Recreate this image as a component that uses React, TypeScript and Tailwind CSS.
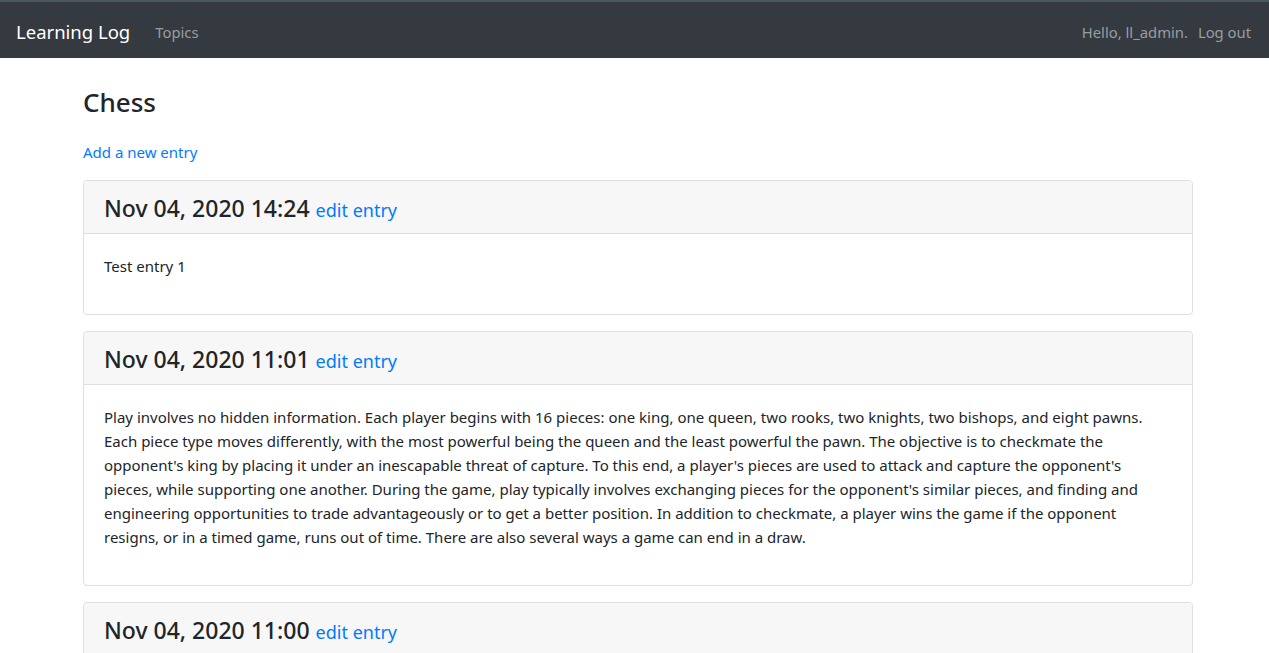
const entries = [
  {
    date: 'Nov 04, 2020 14:24',
    text: 'Test entry 1',
  },
  {
    date: 'Nov 04, 2020 11:01',
    text: "Play involves no hidden information. Each player begins with 16 pieces: one king, one queen, two rooks, two knights, two bishops, and eight pawns. Each piece type moves differently, with the most powerful being the queen and the least powerful the pawn. The objective is to checkmate the opponent's king by placing it under an inescapable threat of capture. To this end, a player's pieces are used to attack and capture the opponent's pieces, while supporting one another. During the game, play typically involves exchanging pieces for the opponent's similar pieces, and finding and engineering opportunities to trade advantageously or to get a better position. In addition to checkmate, a player wins the game if the opponent resigns, or in a timed game, runs out of time. There are also several ways a game can end in a draw.",
  },
  {
    date: 'Nov 04, 2020 11:00',
    text: 'Chess is a two-player strategy board game played on a checkered board with 64 squares arranged in an 8×8 grid.',
  },
];

function Navbar() {
  return (
    <nav className="border-t-2 border-[#4a5861] bg-[#343a40] h-[58px] flex items-center px-4 pt-[4px]">
      <a href="#" className="text-[18.5px] text-white mr-[25px] leading-[30px]">
        Learning Log
      </a>
      <a href="#" className="text-[14.8px] text-[#9a9da0]">
        Topics
      </a>
      <div className="ml-auto flex items-center text-[14.8px] text-[#9a9da0]">
        <span className="mr-[10px]">Hello, ll_admin.</span>
        <a href="#" className="mr-[2px]">
          Log out
        </a>
      </div>
    </nav>
  );
}

function EntryCard({ date, text }: { date: string; text: string }) {
  return (
    <div className="mb-4 rounded border border-[#dfdfdf] bg-white">
      <div className="bg-[#f7f7f7] border-b border-[#dfdfdf] px-5 pt-[13px] pb-[11px] rounded-t">
        <h4 className="h-[28px] text-[23px] leading-[28px] font-medium text-[#212529] flex items-baseline gap-[6px]">
          <span>{date}</span>
          <a href="#" className="text-[18px] leading-none font-normal text-[#007bff]">
            edit entry
          </a>
        </h4>
      </div>
      <div className="p-5">
        <p className="mb-4 max-w-[1050px] text-[15px] leading-6 text-[#212529]">{text}</p>
      </div>
    </div>
  );
}

export default function App() {
  return (
    <div className="min-h-screen bg-white font-['Noto_Sans',sans-serif] text-[#212529]">
      <Navbar />
      <main className="ml-[83px] w-[1110px]">
        <h2 className="pt-[25px] text-[26px] leading-[38px] font-medium mb-[19px]">Chess</h2>
        <p className="mb-4 leading-6 text-[15px]">
          <a href="#" className="text-[#007bff]">
            Add a new entry
          </a>
        </p>
        {entries.map((e) => (
          <EntryCard key={e.date} date={e.date} text={e.text} />
        ))}
      </main>
    </div>
  );
}
